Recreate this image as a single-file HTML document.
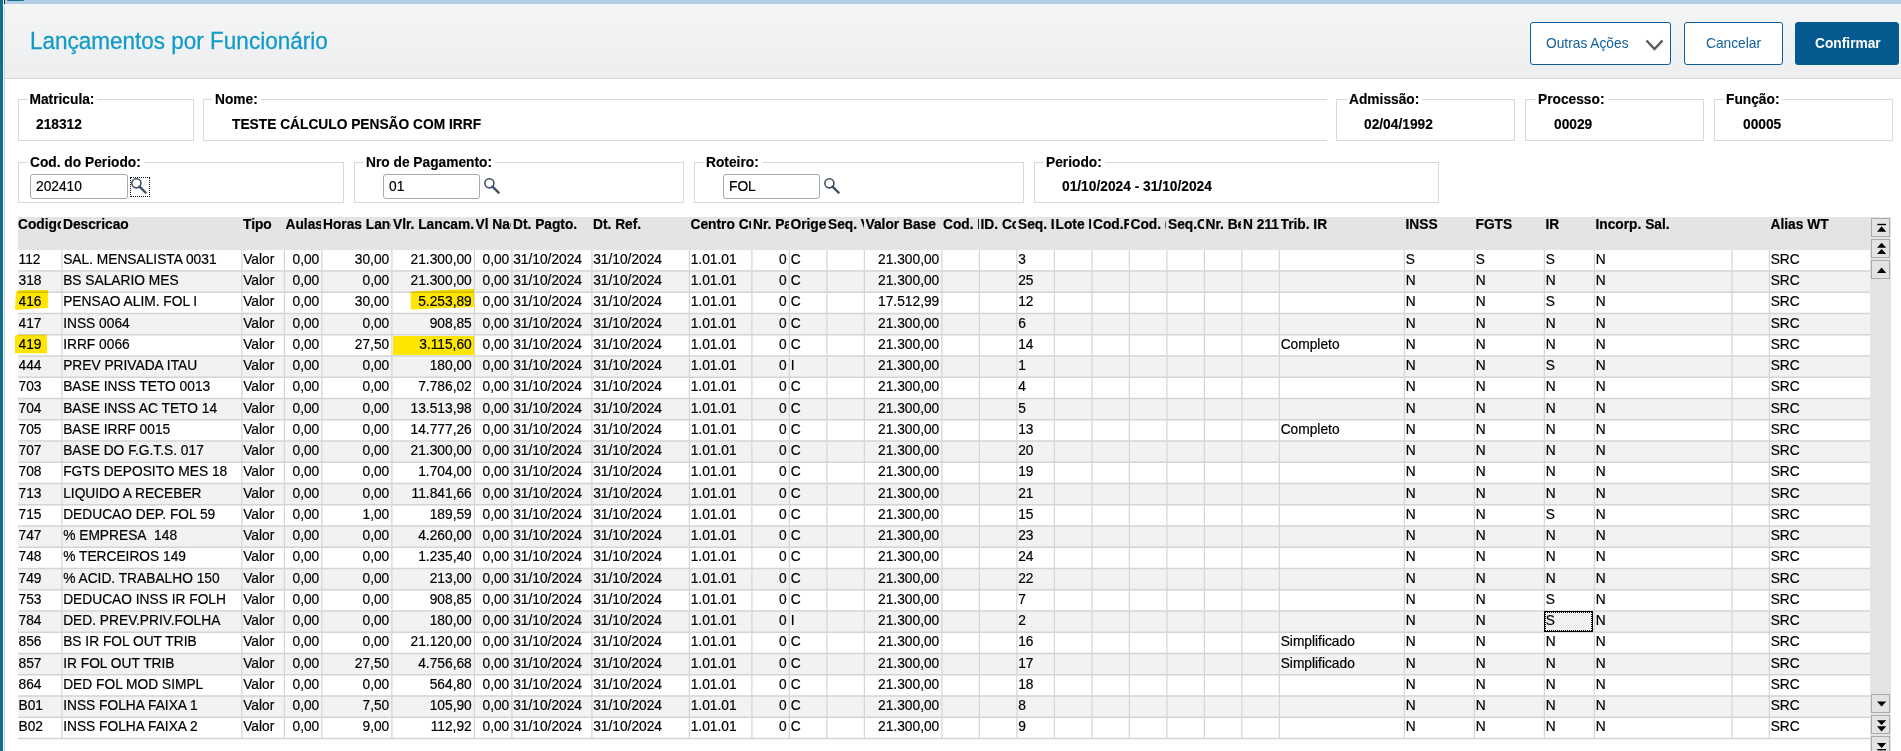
<!DOCTYPE html>
<html><head><meta charset="utf-8"><title>Lançamentos por Funcionário</title>
<style>
*{box-sizing:border-box}
html,body{margin:0;padding:0}
body{width:1901px;height:751px;overflow:hidden;position:relative;background:#fff;font-family:"Liberation Sans",sans-serif;color:#000;font-size:13.75px}
.a{position:absolute}
.t{position:absolute;white-space:nowrap;overflow:hidden;line-height:18px;height:18px;-webkit-text-stroke:0.2px #000}
.r{text-align:right}
.b{font-weight:bold}
.fs{position:absolute;border:1px solid #d9d9d9;background:#fff}
.lb{position:absolute;background:#fff;font-weight:bold;white-space:nowrap;line-height:16px;padding:0 3px 0 2px;-webkit-text-stroke:0.15px #000}
.val{position:absolute;font-weight:bold;white-space:nowrap;line-height:16px;-webkit-text-stroke:0.15px #000}
.inp{position:absolute;-webkit-text-stroke:0.2px #000;border:1px solid #a2abb0;border-radius:3px;background:#fff;line-height:23px;padding-left:5px;white-space:nowrap}
.btn{position:absolute;border:1.5px solid #0d5f93;border-radius:3px;background:#fff;color:#14609a;text-align:left;line-height:42px;white-space:nowrap}
</style></head><body>

<div class="a" style="left:0;top:0;width:3px;height:751px;background:#0f6f8d"></div>
<div class="a" style="left:3px;top:0;width:1px;height:751px;background:#fdfdfd"></div>
<div class="a" style="left:4px;top:0;width:1px;height:751px;background:#c3d6ec"></div>
<div class="a" style="left:4px;top:0;width:1px;height:4px;background:#222"></div>
<div class="a" style="left:5px;top:0;width:1896px;height:4px;background:#b5cde6"></div>
<div class="a" style="left:7px;top:0;width:17px;height:1px;background:#14708f;border-radius:0 0 2px 2px"></div>
<div class="a" style="left:5px;top:4px;width:1896px;height:74px;background:linear-gradient(#f4f5f5,#edeef0)"></div>
<div class="a" style="left:5px;top:78px;width:1896px;height:1px;background:#d6d6d6"></div>
<div class="a" style="left:30px;top:29px;font-size:22.5px;color:#0f9bc8;white-space:nowrap;line-height:26px;transform:scaleY(1.1);transform-origin:0 20.8px;-webkit-text-stroke:0.25px #0f9bc8">Lançamentos por Funcionário</div>
<div class="btn" style="left:1530px;top:22px;width:141px;height:43px;padding-left:15px">Outras Ações</div>
<svg class="a" style="left:1644px;top:38px" width="22" height="14" viewBox="0 0 22 14"><polyline points="2.5,2.5 10.5,11 18.5,2.5" fill="none" stroke="#5a5a5a" stroke-width="2.5"/></svg>
<div class="btn" style="left:1684px;top:22px;width:99px;height:43px;padding-left:21px">Cancelar</div>
<div class="btn b" style="left:1795px;top:22px;width:104px;height:43px;padding-left:19px;background:#04598e;border-color:#04598e;color:#fff">Confirmar</div>
<div class="fs" style="left:18px;top:99px;width:176px;height:42px;"></div>
<div class="lb" style="left:27.5px;top:92px">Matricula:</div>
<div class="val" style="left:36px;top:117px">218312</div>
<div class="fs" style="left:203px;top:99px;width:1124px;height:42px;border-right:0"></div>
<div class="lb" style="left:213px;top:92px">Nome:</div>
<div class="val" style="left:232px;top:117px">TESTE CÁLCULO PENSÃO COM IRRF</div>
<div class="fs" style="left:1336px;top:99px;width:179px;height:42px;"></div>
<div class="lb" style="left:1347px;top:92px">Admissão:</div>
<div class="val" style="left:1364px;top:117px">02/04/1992</div>
<div class="fs" style="left:1525px;top:99px;width:179px;height:42px;"></div>
<div class="lb" style="left:1536px;top:92px">Processo:</div>
<div class="val" style="left:1554px;top:117px">00029</div>
<div class="fs" style="left:1714px;top:99px;width:179px;height:42px;"></div>
<div class="lb" style="left:1724px;top:92px">Função:</div>
<div class="val" style="left:1743px;top:117px">00005</div>
<div class="fs" style="left:18px;top:162px;width:326px;height:41px;"></div>
<div class="lb" style="left:28px;top:155px">Cod. do Periodo:</div>
<div class="fs" style="left:354px;top:162px;width:330px;height:41px;"></div>
<div class="lb" style="left:364px;top:155px">Nro de Pagamento:</div>
<div class="fs" style="left:694px;top:162px;width:330px;height:41px;"></div>
<div class="lb" style="left:704px;top:155px">Roteiro:</div>
<div class="fs" style="left:1034px;top:162px;width:405px;height:41px;"></div>
<div class="lb" style="left:1044px;top:155px">Periodo:</div>
<div class="val" style="left:1062px;top:179px">01/10/2024 - 31/10/2024</div>
<div class="inp" style="left:30px;top:174px;width:98px;height:25px">202410</div>
<div class="a" style="left:130px;top:177px;width:20px;height:20px;border:1px dotted #111"></div>
<svg class="a" style="left:130px;top:177px" width="20" height="20" viewBox="0 0 20 20"><circle cx="6.4" cy="6.3" r="4.55" fill="none" stroke="#3e5068" stroke-width="1.6"/><line x1="9.5" y1="9.6" x2="15.6" y2="15.6" stroke="#3e5068" stroke-width="2.4" stroke-linecap="round"/></svg>
<div class="inp" style="left:383px;top:174px;width:97px;height:25px">01</div>
<svg class="a" style="left:483px;top:177px" width="20" height="20" viewBox="0 0 20 20"><circle cx="6.4" cy="6.3" r="4.55" fill="none" stroke="#3e5068" stroke-width="1.6"/><line x1="9.5" y1="9.6" x2="15.6" y2="15.6" stroke="#3e5068" stroke-width="2.4" stroke-linecap="round"/></svg>
<div class="inp" style="left:723px;top:174px;width:97px;height:25px">FOL</div>
<svg class="a" style="left:823px;top:177px" width="20" height="20" viewBox="0 0 20 20"><circle cx="6.4" cy="6.3" r="4.55" fill="none" stroke="#3e5068" stroke-width="1.6"/><line x1="9.5" y1="9.6" x2="15.6" y2="15.6" stroke="#3e5068" stroke-width="2.4" stroke-linecap="round"/></svg>
<div class="a" style="left:18px;top:217px;width:1873px;height:33px;background:#e4e4e4"></div>
<div class="t b" style="left:18px;top:216px;width:43.25px">Codigo</div>
<div class="t b" style="left:63.0px;top:216px;width:178.25px">Descricao</div>
<div class="t b" style="left:243.0px;top:216px;width:40.75px">Tipo</div>
<div class="t b" style="left:285.5px;top:216px;width:35.75px">Aulas</div>
<div class="t b" style="left:323.0px;top:216px;width:68.25px">Horas Lanc.</div>
<div class="t b" style="left:393.0px;top:216px;width:80.75px">Vlr. Lancam.</div>
<div class="t b" style="left:475.5px;top:216px;width:35.75px">Vl Nao Inc.</div>
<div class="t b" style="left:513.0px;top:216px;width:78.25px">Dt. Pagto.</div>
<div class="t b" style="left:593.0px;top:216px;width:95.75px">Dt. Ref.</div>
<div class="t b" style="left:690.5px;top:216px;width:60.75px">Centro Custo</div>
<div class="t b" style="left:753.0px;top:216px;width:35.75px">Nr. Pagto</div>
<div class="t b" style="left:790.5px;top:216px;width:35.75px">Origem</div>
<div class="t b" style="left:828.0px;top:216px;width:35.75px">Seq. Valor</div>
<div class="t b" style="left:865.5px;top:216px;width:75.75px">Valor Base</div>
<div class="t b" style="left:943.0px;top:216px;width:35.75px">Cod. IRRF</div>
<div class="t b" style="left:980.5px;top:216px;width:35.75px">ID. Cod.</div>
<div class="t b" style="left:1018.0px;top:216px;width:35.75px">Seq. Lancam</div>
<div class="t b" style="left:1055.5px;top:216px;width:35.75px">Lote Folha</div>
<div class="t b" style="left:1093.0px;top:216px;width:35.75px">Cod.Funcao</div>
<div class="t b" style="left:1130.5px;top:216px;width:35.75px">Cod. (</div>
<div class="t b" style="left:1168.0px;top:216px;width:35.75px">Seq.Cod</div>
<div class="t b" style="left:1205.5px;top:216px;width:35.75px">Nr. Bene</div>
<div class="t b" style="left:1243.0px;top:216px;width:35.75px">N 211</div>
<div class="t b" style="left:1280.5px;top:216px;width:123.25px">Trib. IR</div>
<div class="t b" style="left:1405.5px;top:216px;width:68.25px">INSS</div>
<div class="t b" style="left:1475.5px;top:216px;width:68.25px">FGTS</div>
<div class="t b" style="left:1545.5px;top:216px;width:48.25px">IR</div>
<div class="t b" style="left:1595.5px;top:216px;width:135.75px">Incorp. Sal.</div>
<div class="t b" style="left:1733.0px;top:216px;width:35.75px"></div>
<div class="t b" style="left:1770.5px;top:216px;width:99.5px">Alias WT</div>
<div class="a" style="left:1870px;top:250px;width:21px;height:501px;background:#e4e4e4"></div>
<svg class="a" style="left:0;top:0" width="1901" height="751"><rect x="18" y="271.25" width="1852" height="21.25" fill="#f2f2f2"/><rect x="18" y="313.75" width="1852" height="21.25" fill="#f2f2f2"/><rect x="18" y="356.25" width="1852" height="21.25" fill="#f2f2f2"/><rect x="18" y="398.75" width="1852" height="21.25" fill="#f2f2f2"/><rect x="18" y="441.25" width="1852" height="21.25" fill="#f2f2f2"/><rect x="18" y="483.75" width="1852" height="21.25" fill="#f2f2f2"/><rect x="18" y="526.25" width="1852" height="21.25" fill="#f2f2f2"/><rect x="18" y="568.75" width="1852" height="21.25" fill="#f2f2f2"/><rect x="18" y="611.25" width="1852" height="21.25" fill="#f2f2f2"/><rect x="18" y="653.75" width="1852" height="21.25" fill="#f2f2f2"/><rect x="18" y="696.25" width="1852" height="21.25" fill="#f2f2f2"/><rect x="18" y="270.25" width="1852" height="1.5" fill="#d4d4d4"/><rect x="18" y="291.5" width="1852" height="1.5" fill="#d4d4d4"/><rect x="18" y="312.75" width="1852" height="1.5" fill="#d4d4d4"/><rect x="18" y="334.0" width="1852" height="1.5" fill="#d4d4d4"/><rect x="18" y="355.25" width="1852" height="1.5" fill="#d4d4d4"/><rect x="18" y="376.5" width="1852" height="1.5" fill="#d4d4d4"/><rect x="18" y="397.75" width="1852" height="1.5" fill="#d4d4d4"/><rect x="18" y="419.0" width="1852" height="1.5" fill="#d4d4d4"/><rect x="18" y="440.25" width="1852" height="1.5" fill="#d4d4d4"/><rect x="18" y="461.5" width="1852" height="1.5" fill="#d4d4d4"/><rect x="18" y="482.75" width="1852" height="1.5" fill="#d4d4d4"/><rect x="18" y="504.0" width="1852" height="1.5" fill="#d4d4d4"/><rect x="18" y="525.25" width="1852" height="1.5" fill="#d4d4d4"/><rect x="18" y="546.5" width="1852" height="1.5" fill="#d4d4d4"/><rect x="18" y="567.75" width="1852" height="1.5" fill="#d4d4d4"/><rect x="18" y="589.0" width="1852" height="1.5" fill="#d4d4d4"/><rect x="18" y="610.25" width="1852" height="1.5" fill="#d4d4d4"/><rect x="18" y="631.5" width="1852" height="1.5" fill="#d4d4d4"/><rect x="18" y="652.75" width="1852" height="1.5" fill="#d4d4d4"/><rect x="18" y="674.0" width="1852" height="1.5" fill="#d4d4d4"/><rect x="18" y="695.25" width="1852" height="1.5" fill="#d4d4d4"/><rect x="18" y="716.5" width="1852" height="1.5" fill="#d4d4d4"/><rect x="18" y="737.75" width="1852" height="1.5" fill="#d4d4d4"/><rect x="61.25" y="250" width="1.25" height="488.75" fill="#d6d6d6"/><rect x="241.25" y="250" width="1.25" height="488.75" fill="#d6d6d6"/><rect x="283.75" y="250" width="1.25" height="488.75" fill="#d6d6d6"/><rect x="321.25" y="250" width="1.25" height="488.75" fill="#d6d6d6"/><rect x="391.25" y="250" width="1.25" height="488.75" fill="#d6d6d6"/><rect x="473.75" y="250" width="1.25" height="488.75" fill="#d6d6d6"/><rect x="511.25" y="250" width="1.25" height="488.75" fill="#d6d6d6"/><rect x="591.25" y="250" width="1.25" height="488.75" fill="#d6d6d6"/><rect x="688.75" y="250" width="1.25" height="488.75" fill="#d6d6d6"/><rect x="751.25" y="250" width="1.25" height="488.75" fill="#d6d6d6"/><rect x="788.75" y="250" width="1.25" height="488.75" fill="#d6d6d6"/><rect x="826.25" y="250" width="1.25" height="488.75" fill="#d6d6d6"/><rect x="863.75" y="250" width="1.25" height="488.75" fill="#d6d6d6"/><rect x="941.25" y="250" width="1.25" height="488.75" fill="#d6d6d6"/><rect x="978.75" y="250" width="1.25" height="488.75" fill="#d6d6d6"/><rect x="1016.25" y="250" width="1.25" height="488.75" fill="#d6d6d6"/><rect x="1053.75" y="250" width="1.25" height="488.75" fill="#d6d6d6"/><rect x="1091.25" y="250" width="1.25" height="488.75" fill="#d6d6d6"/><rect x="1128.75" y="250" width="1.25" height="488.75" fill="#d6d6d6"/><rect x="1166.25" y="250" width="1.25" height="488.75" fill="#d6d6d6"/><rect x="1203.75" y="250" width="1.25" height="488.75" fill="#d6d6d6"/><rect x="1241.25" y="250" width="1.25" height="488.75" fill="#d6d6d6"/><rect x="1278.75" y="250" width="1.25" height="488.75" fill="#d6d6d6"/><rect x="1403.75" y="250" width="1.25" height="488.75" fill="#d6d6d6"/><rect x="1473.75" y="250" width="1.25" height="488.75" fill="#d6d6d6"/><rect x="1543.75" y="250" width="1.25" height="488.75" fill="#d6d6d6"/><rect x="1593.75" y="250" width="1.25" height="488.75" fill="#d6d6d6"/><rect x="1731.25" y="250" width="1.25" height="488.75" fill="#d6d6d6"/><rect x="1768.75" y="250" width="1.25" height="488.75" fill="#d6d6d6"/></svg>
<div class="t" style="left:18.5px;top:251px;width:42.75px">112</div>
<div class="t" style="left:63.2px;top:251px;width:178.05px">SAL. MENSALISTA 0031</div>
<div class="t" style="left:243.2px;top:251px;width:40.55px">Valor</div>
<div class="t r" style="left:285.75px;top:251px;width:33.5px">0,00</div>
<div class="t r" style="left:323.25px;top:251px;width:66.0px">30,00</div>
<div class="t r" style="left:393.25px;top:251px;width:78.5px">21.300,00</div>
<div class="t r" style="left:475.75px;top:251px;width:33.5px">0,00</div>
<div class="t" style="left:513.2px;top:251px;width:78.05px">31/10/2024</div>
<div class="t" style="left:593.2px;top:251px;width:95.55px">31/10/2024</div>
<div class="t" style="left:690.7px;top:251px;width:60.55px">1.01.01</div>
<div class="t r" style="left:753.25px;top:251px;width:33.5px">0</div>
<div class="t" style="left:790.7px;top:251px;width:35.55px">C</div>
<div class="t r" style="left:865.75px;top:251px;width:73.5px">21.300,00</div>
<div class="t" style="left:1018.2px;top:251px;width:35.55px">3</div>
<div class="t" style="left:1405.7px;top:251px;width:68.05px">S</div>
<div class="t" style="left:1475.7px;top:251px;width:68.05px">S</div>
<div class="t" style="left:1545.7px;top:251px;width:48.05px">S</div>
<div class="t" style="left:1595.7px;top:251px;width:135.55px">N</div>
<div class="t" style="left:1770.7px;top:251px;width:99.3px">SRC</div>
<div class="t" style="left:18.5px;top:272px;width:42.75px">318</div>
<div class="t" style="left:63.2px;top:272px;width:178.05px">BS SALARIO MES</div>
<div class="t" style="left:243.2px;top:272px;width:40.55px">Valor</div>
<div class="t r" style="left:285.75px;top:272px;width:33.5px">0,00</div>
<div class="t r" style="left:323.25px;top:272px;width:66.0px">0,00</div>
<div class="t r" style="left:393.25px;top:272px;width:78.5px">21.300,00</div>
<div class="t r" style="left:475.75px;top:272px;width:33.5px">0,00</div>
<div class="t" style="left:513.2px;top:272px;width:78.05px">31/10/2024</div>
<div class="t" style="left:593.2px;top:272px;width:95.55px">31/10/2024</div>
<div class="t" style="left:690.7px;top:272px;width:60.55px">1.01.01</div>
<div class="t r" style="left:753.25px;top:272px;width:33.5px">0</div>
<div class="t" style="left:790.7px;top:272px;width:35.55px">C</div>
<div class="t r" style="left:865.75px;top:272px;width:73.5px">21.300,00</div>
<div class="t" style="left:1018.2px;top:272px;width:35.55px">25</div>
<div class="t" style="left:1405.7px;top:272px;width:68.05px">N</div>
<div class="t" style="left:1475.7px;top:272px;width:68.05px">N</div>
<div class="t" style="left:1545.7px;top:272px;width:48.05px">N</div>
<div class="t" style="left:1595.7px;top:272px;width:135.55px">N</div>
<div class="t" style="left:1770.7px;top:272px;width:99.3px">SRC</div>
<div class="t" style="left:18.5px;top:293px;width:42.75px">416</div>
<div class="t" style="left:63.2px;top:293px;width:178.05px">PENSAO ALIM. FOL I</div>
<div class="t" style="left:243.2px;top:293px;width:40.55px">Valor</div>
<div class="t r" style="left:285.75px;top:293px;width:33.5px">0,00</div>
<div class="t r" style="left:323.25px;top:293px;width:66.0px">30,00</div>
<div class="t r" style="left:393.25px;top:293px;width:78.5px">5.253,89</div>
<div class="t r" style="left:475.75px;top:293px;width:33.5px">0,00</div>
<div class="t" style="left:513.2px;top:293px;width:78.05px">31/10/2024</div>
<div class="t" style="left:593.2px;top:293px;width:95.55px">31/10/2024</div>
<div class="t" style="left:690.7px;top:293px;width:60.55px">1.01.01</div>
<div class="t r" style="left:753.25px;top:293px;width:33.5px">0</div>
<div class="t" style="left:790.7px;top:293px;width:35.55px">C</div>
<div class="t r" style="left:865.75px;top:293px;width:73.5px">17.512,99</div>
<div class="t" style="left:1018.2px;top:293px;width:35.55px">12</div>
<div class="t" style="left:1405.7px;top:293px;width:68.05px">N</div>
<div class="t" style="left:1475.7px;top:293px;width:68.05px">N</div>
<div class="t" style="left:1545.7px;top:293px;width:48.05px">S</div>
<div class="t" style="left:1595.7px;top:293px;width:135.55px">N</div>
<div class="t" style="left:1770.7px;top:293px;width:99.3px">SRC</div>
<div class="t" style="left:18.5px;top:315px;width:42.75px">417</div>
<div class="t" style="left:63.2px;top:315px;width:178.05px">INSS 0064</div>
<div class="t" style="left:243.2px;top:315px;width:40.55px">Valor</div>
<div class="t r" style="left:285.75px;top:315px;width:33.5px">0,00</div>
<div class="t r" style="left:323.25px;top:315px;width:66.0px">0,00</div>
<div class="t r" style="left:393.25px;top:315px;width:78.5px">908,85</div>
<div class="t r" style="left:475.75px;top:315px;width:33.5px">0,00</div>
<div class="t" style="left:513.2px;top:315px;width:78.05px">31/10/2024</div>
<div class="t" style="left:593.2px;top:315px;width:95.55px">31/10/2024</div>
<div class="t" style="left:690.7px;top:315px;width:60.55px">1.01.01</div>
<div class="t r" style="left:753.25px;top:315px;width:33.5px">0</div>
<div class="t" style="left:790.7px;top:315px;width:35.55px">C</div>
<div class="t r" style="left:865.75px;top:315px;width:73.5px">21.300,00</div>
<div class="t" style="left:1018.2px;top:315px;width:35.55px">6</div>
<div class="t" style="left:1405.7px;top:315px;width:68.05px">N</div>
<div class="t" style="left:1475.7px;top:315px;width:68.05px">N</div>
<div class="t" style="left:1545.7px;top:315px;width:48.05px">N</div>
<div class="t" style="left:1595.7px;top:315px;width:135.55px">N</div>
<div class="t" style="left:1770.7px;top:315px;width:99.3px">SRC</div>
<div class="t" style="left:18.5px;top:336px;width:42.75px">419</div>
<div class="t" style="left:63.2px;top:336px;width:178.05px">IRRF 0066</div>
<div class="t" style="left:243.2px;top:336px;width:40.55px">Valor</div>
<div class="t r" style="left:285.75px;top:336px;width:33.5px">0,00</div>
<div class="t r" style="left:323.25px;top:336px;width:66.0px">27,50</div>
<div class="t r" style="left:393.25px;top:336px;width:78.5px">3.115,60</div>
<div class="t r" style="left:475.75px;top:336px;width:33.5px">0,00</div>
<div class="t" style="left:513.2px;top:336px;width:78.05px">31/10/2024</div>
<div class="t" style="left:593.2px;top:336px;width:95.55px">31/10/2024</div>
<div class="t" style="left:690.7px;top:336px;width:60.55px">1.01.01</div>
<div class="t r" style="left:753.25px;top:336px;width:33.5px">0</div>
<div class="t" style="left:790.7px;top:336px;width:35.55px">C</div>
<div class="t r" style="left:865.75px;top:336px;width:73.5px">21.300,00</div>
<div class="t" style="left:1018.2px;top:336px;width:35.55px">14</div>
<div class="t" style="left:1280.7px;top:336px;width:123.05px">Completo</div>
<div class="t" style="left:1405.7px;top:336px;width:68.05px">N</div>
<div class="t" style="left:1475.7px;top:336px;width:68.05px">N</div>
<div class="t" style="left:1545.7px;top:336px;width:48.05px">N</div>
<div class="t" style="left:1595.7px;top:336px;width:135.55px">N</div>
<div class="t" style="left:1770.7px;top:336px;width:99.3px">SRC</div>
<div class="t" style="left:18.5px;top:357px;width:42.75px">444</div>
<div class="t" style="left:63.2px;top:357px;width:178.05px">PREV PRIVADA ITAU</div>
<div class="t" style="left:243.2px;top:357px;width:40.55px">Valor</div>
<div class="t r" style="left:285.75px;top:357px;width:33.5px">0,00</div>
<div class="t r" style="left:323.25px;top:357px;width:66.0px">0,00</div>
<div class="t r" style="left:393.25px;top:357px;width:78.5px">180,00</div>
<div class="t r" style="left:475.75px;top:357px;width:33.5px">0,00</div>
<div class="t" style="left:513.2px;top:357px;width:78.05px">31/10/2024</div>
<div class="t" style="left:593.2px;top:357px;width:95.55px">31/10/2024</div>
<div class="t" style="left:690.7px;top:357px;width:60.55px">1.01.01</div>
<div class="t r" style="left:753.25px;top:357px;width:33.5px">0</div>
<div class="t" style="left:790.7px;top:357px;width:35.55px">I</div>
<div class="t r" style="left:865.75px;top:357px;width:73.5px">21.300,00</div>
<div class="t" style="left:1018.2px;top:357px;width:35.55px">1</div>
<div class="t" style="left:1405.7px;top:357px;width:68.05px">N</div>
<div class="t" style="left:1475.7px;top:357px;width:68.05px">N</div>
<div class="t" style="left:1545.7px;top:357px;width:48.05px">S</div>
<div class="t" style="left:1595.7px;top:357px;width:135.55px">N</div>
<div class="t" style="left:1770.7px;top:357px;width:99.3px">SRC</div>
<div class="t" style="left:18.5px;top:378px;width:42.75px">703</div>
<div class="t" style="left:63.2px;top:378px;width:178.05px">BASE INSS TETO 0013</div>
<div class="t" style="left:243.2px;top:378px;width:40.55px">Valor</div>
<div class="t r" style="left:285.75px;top:378px;width:33.5px">0,00</div>
<div class="t r" style="left:323.25px;top:378px;width:66.0px">0,00</div>
<div class="t r" style="left:393.25px;top:378px;width:78.5px">7.786,02</div>
<div class="t r" style="left:475.75px;top:378px;width:33.5px">0,00</div>
<div class="t" style="left:513.2px;top:378px;width:78.05px">31/10/2024</div>
<div class="t" style="left:593.2px;top:378px;width:95.55px">31/10/2024</div>
<div class="t" style="left:690.7px;top:378px;width:60.55px">1.01.01</div>
<div class="t r" style="left:753.25px;top:378px;width:33.5px">0</div>
<div class="t" style="left:790.7px;top:378px;width:35.55px">C</div>
<div class="t r" style="left:865.75px;top:378px;width:73.5px">21.300,00</div>
<div class="t" style="left:1018.2px;top:378px;width:35.55px">4</div>
<div class="t" style="left:1405.7px;top:378px;width:68.05px">N</div>
<div class="t" style="left:1475.7px;top:378px;width:68.05px">N</div>
<div class="t" style="left:1545.7px;top:378px;width:48.05px">N</div>
<div class="t" style="left:1595.7px;top:378px;width:135.55px">N</div>
<div class="t" style="left:1770.7px;top:378px;width:99.3px">SRC</div>
<div class="t" style="left:18.5px;top:400px;width:42.75px">704</div>
<div class="t" style="left:63.2px;top:400px;width:178.05px">BASE INSS AC TETO 14</div>
<div class="t" style="left:243.2px;top:400px;width:40.55px">Valor</div>
<div class="t r" style="left:285.75px;top:400px;width:33.5px">0,00</div>
<div class="t r" style="left:323.25px;top:400px;width:66.0px">0,00</div>
<div class="t r" style="left:393.25px;top:400px;width:78.5px">13.513,98</div>
<div class="t r" style="left:475.75px;top:400px;width:33.5px">0,00</div>
<div class="t" style="left:513.2px;top:400px;width:78.05px">31/10/2024</div>
<div class="t" style="left:593.2px;top:400px;width:95.55px">31/10/2024</div>
<div class="t" style="left:690.7px;top:400px;width:60.55px">1.01.01</div>
<div class="t r" style="left:753.25px;top:400px;width:33.5px">0</div>
<div class="t" style="left:790.7px;top:400px;width:35.55px">C</div>
<div class="t r" style="left:865.75px;top:400px;width:73.5px">21.300,00</div>
<div class="t" style="left:1018.2px;top:400px;width:35.55px">5</div>
<div class="t" style="left:1405.7px;top:400px;width:68.05px">N</div>
<div class="t" style="left:1475.7px;top:400px;width:68.05px">N</div>
<div class="t" style="left:1545.7px;top:400px;width:48.05px">N</div>
<div class="t" style="left:1595.7px;top:400px;width:135.55px">N</div>
<div class="t" style="left:1770.7px;top:400px;width:99.3px">SRC</div>
<div class="t" style="left:18.5px;top:421px;width:42.75px">705</div>
<div class="t" style="left:63.2px;top:421px;width:178.05px">BASE IRRF 0015</div>
<div class="t" style="left:243.2px;top:421px;width:40.55px">Valor</div>
<div class="t r" style="left:285.75px;top:421px;width:33.5px">0,00</div>
<div class="t r" style="left:323.25px;top:421px;width:66.0px">0,00</div>
<div class="t r" style="left:393.25px;top:421px;width:78.5px">14.777,26</div>
<div class="t r" style="left:475.75px;top:421px;width:33.5px">0,00</div>
<div class="t" style="left:513.2px;top:421px;width:78.05px">31/10/2024</div>
<div class="t" style="left:593.2px;top:421px;width:95.55px">31/10/2024</div>
<div class="t" style="left:690.7px;top:421px;width:60.55px">1.01.01</div>
<div class="t r" style="left:753.25px;top:421px;width:33.5px">0</div>
<div class="t" style="left:790.7px;top:421px;width:35.55px">C</div>
<div class="t r" style="left:865.75px;top:421px;width:73.5px">21.300,00</div>
<div class="t" style="left:1018.2px;top:421px;width:35.55px">13</div>
<div class="t" style="left:1280.7px;top:421px;width:123.05px">Completo</div>
<div class="t" style="left:1405.7px;top:421px;width:68.05px">N</div>
<div class="t" style="left:1475.7px;top:421px;width:68.05px">N</div>
<div class="t" style="left:1545.7px;top:421px;width:48.05px">N</div>
<div class="t" style="left:1595.7px;top:421px;width:135.55px">N</div>
<div class="t" style="left:1770.7px;top:421px;width:99.3px">SRC</div>
<div class="t" style="left:18.5px;top:442px;width:42.75px">707</div>
<div class="t" style="left:63.2px;top:442px;width:178.05px">BASE DO F.G.T.S. 017</div>
<div class="t" style="left:243.2px;top:442px;width:40.55px">Valor</div>
<div class="t r" style="left:285.75px;top:442px;width:33.5px">0,00</div>
<div class="t r" style="left:323.25px;top:442px;width:66.0px">0,00</div>
<div class="t r" style="left:393.25px;top:442px;width:78.5px">21.300,00</div>
<div class="t r" style="left:475.75px;top:442px;width:33.5px">0,00</div>
<div class="t" style="left:513.2px;top:442px;width:78.05px">31/10/2024</div>
<div class="t" style="left:593.2px;top:442px;width:95.55px">31/10/2024</div>
<div class="t" style="left:690.7px;top:442px;width:60.55px">1.01.01</div>
<div class="t r" style="left:753.25px;top:442px;width:33.5px">0</div>
<div class="t" style="left:790.7px;top:442px;width:35.55px">C</div>
<div class="t r" style="left:865.75px;top:442px;width:73.5px">21.300,00</div>
<div class="t" style="left:1018.2px;top:442px;width:35.55px">20</div>
<div class="t" style="left:1405.7px;top:442px;width:68.05px">N</div>
<div class="t" style="left:1475.7px;top:442px;width:68.05px">N</div>
<div class="t" style="left:1545.7px;top:442px;width:48.05px">N</div>
<div class="t" style="left:1595.7px;top:442px;width:135.55px">N</div>
<div class="t" style="left:1770.7px;top:442px;width:99.3px">SRC</div>
<div class="t" style="left:18.5px;top:463px;width:42.75px">708</div>
<div class="t" style="left:63.2px;top:463px;width:178.05px">FGTS DEPOSITO MES 18</div>
<div class="t" style="left:243.2px;top:463px;width:40.55px">Valor</div>
<div class="t r" style="left:285.75px;top:463px;width:33.5px">0,00</div>
<div class="t r" style="left:323.25px;top:463px;width:66.0px">0,00</div>
<div class="t r" style="left:393.25px;top:463px;width:78.5px">1.704,00</div>
<div class="t r" style="left:475.75px;top:463px;width:33.5px">0,00</div>
<div class="t" style="left:513.2px;top:463px;width:78.05px">31/10/2024</div>
<div class="t" style="left:593.2px;top:463px;width:95.55px">31/10/2024</div>
<div class="t" style="left:690.7px;top:463px;width:60.55px">1.01.01</div>
<div class="t r" style="left:753.25px;top:463px;width:33.5px">0</div>
<div class="t" style="left:790.7px;top:463px;width:35.55px">C</div>
<div class="t r" style="left:865.75px;top:463px;width:73.5px">21.300,00</div>
<div class="t" style="left:1018.2px;top:463px;width:35.55px">19</div>
<div class="t" style="left:1405.7px;top:463px;width:68.05px">N</div>
<div class="t" style="left:1475.7px;top:463px;width:68.05px">N</div>
<div class="t" style="left:1545.7px;top:463px;width:48.05px">N</div>
<div class="t" style="left:1595.7px;top:463px;width:135.55px">N</div>
<div class="t" style="left:1770.7px;top:463px;width:99.3px">SRC</div>
<div class="t" style="left:18.5px;top:485px;width:42.75px">713</div>
<div class="t" style="left:63.2px;top:485px;width:178.05px">LIQUIDO A RECEBER</div>
<div class="t" style="left:243.2px;top:485px;width:40.55px">Valor</div>
<div class="t r" style="left:285.75px;top:485px;width:33.5px">0,00</div>
<div class="t r" style="left:323.25px;top:485px;width:66.0px">0,00</div>
<div class="t r" style="left:393.25px;top:485px;width:78.5px">11.841,66</div>
<div class="t r" style="left:475.75px;top:485px;width:33.5px">0,00</div>
<div class="t" style="left:513.2px;top:485px;width:78.05px">31/10/2024</div>
<div class="t" style="left:593.2px;top:485px;width:95.55px">31/10/2024</div>
<div class="t" style="left:690.7px;top:485px;width:60.55px">1.01.01</div>
<div class="t r" style="left:753.25px;top:485px;width:33.5px">0</div>
<div class="t" style="left:790.7px;top:485px;width:35.55px">C</div>
<div class="t r" style="left:865.75px;top:485px;width:73.5px">21.300,00</div>
<div class="t" style="left:1018.2px;top:485px;width:35.55px">21</div>
<div class="t" style="left:1405.7px;top:485px;width:68.05px">N</div>
<div class="t" style="left:1475.7px;top:485px;width:68.05px">N</div>
<div class="t" style="left:1545.7px;top:485px;width:48.05px">N</div>
<div class="t" style="left:1595.7px;top:485px;width:135.55px">N</div>
<div class="t" style="left:1770.7px;top:485px;width:99.3px">SRC</div>
<div class="t" style="left:18.5px;top:506px;width:42.75px">715</div>
<div class="t" style="left:63.2px;top:506px;width:178.05px">DEDUCAO DEP. FOL 59</div>
<div class="t" style="left:243.2px;top:506px;width:40.55px">Valor</div>
<div class="t r" style="left:285.75px;top:506px;width:33.5px">0,00</div>
<div class="t r" style="left:323.25px;top:506px;width:66.0px">1,00</div>
<div class="t r" style="left:393.25px;top:506px;width:78.5px">189,59</div>
<div class="t r" style="left:475.75px;top:506px;width:33.5px">0,00</div>
<div class="t" style="left:513.2px;top:506px;width:78.05px">31/10/2024</div>
<div class="t" style="left:593.2px;top:506px;width:95.55px">31/10/2024</div>
<div class="t" style="left:690.7px;top:506px;width:60.55px">1.01.01</div>
<div class="t r" style="left:753.25px;top:506px;width:33.5px">0</div>
<div class="t" style="left:790.7px;top:506px;width:35.55px">C</div>
<div class="t r" style="left:865.75px;top:506px;width:73.5px">21.300,00</div>
<div class="t" style="left:1018.2px;top:506px;width:35.55px">15</div>
<div class="t" style="left:1405.7px;top:506px;width:68.05px">N</div>
<div class="t" style="left:1475.7px;top:506px;width:68.05px">N</div>
<div class="t" style="left:1545.7px;top:506px;width:48.05px">S</div>
<div class="t" style="left:1595.7px;top:506px;width:135.55px">N</div>
<div class="t" style="left:1770.7px;top:506px;width:99.3px">SRC</div>
<div class="t" style="left:18.5px;top:527px;width:42.75px">747</div>
<div class="t" style="left:63.2px;top:527px;width:178.05px">% EMPRESA&nbsp; 148</div>
<div class="t" style="left:243.2px;top:527px;width:40.55px">Valor</div>
<div class="t r" style="left:285.75px;top:527px;width:33.5px">0,00</div>
<div class="t r" style="left:323.25px;top:527px;width:66.0px">0,00</div>
<div class="t r" style="left:393.25px;top:527px;width:78.5px">4.260,00</div>
<div class="t r" style="left:475.75px;top:527px;width:33.5px">0,00</div>
<div class="t" style="left:513.2px;top:527px;width:78.05px">31/10/2024</div>
<div class="t" style="left:593.2px;top:527px;width:95.55px">31/10/2024</div>
<div class="t" style="left:690.7px;top:527px;width:60.55px">1.01.01</div>
<div class="t r" style="left:753.25px;top:527px;width:33.5px">0</div>
<div class="t" style="left:790.7px;top:527px;width:35.55px">C</div>
<div class="t r" style="left:865.75px;top:527px;width:73.5px">21.300,00</div>
<div class="t" style="left:1018.2px;top:527px;width:35.55px">23</div>
<div class="t" style="left:1405.7px;top:527px;width:68.05px">N</div>
<div class="t" style="left:1475.7px;top:527px;width:68.05px">N</div>
<div class="t" style="left:1545.7px;top:527px;width:48.05px">N</div>
<div class="t" style="left:1595.7px;top:527px;width:135.55px">N</div>
<div class="t" style="left:1770.7px;top:527px;width:99.3px">SRC</div>
<div class="t" style="left:18.5px;top:548px;width:42.75px">748</div>
<div class="t" style="left:63.2px;top:548px;width:178.05px">% TERCEIROS 149</div>
<div class="t" style="left:243.2px;top:548px;width:40.55px">Valor</div>
<div class="t r" style="left:285.75px;top:548px;width:33.5px">0,00</div>
<div class="t r" style="left:323.25px;top:548px;width:66.0px">0,00</div>
<div class="t r" style="left:393.25px;top:548px;width:78.5px">1.235,40</div>
<div class="t r" style="left:475.75px;top:548px;width:33.5px">0,00</div>
<div class="t" style="left:513.2px;top:548px;width:78.05px">31/10/2024</div>
<div class="t" style="left:593.2px;top:548px;width:95.55px">31/10/2024</div>
<div class="t" style="left:690.7px;top:548px;width:60.55px">1.01.01</div>
<div class="t r" style="left:753.25px;top:548px;width:33.5px">0</div>
<div class="t" style="left:790.7px;top:548px;width:35.55px">C</div>
<div class="t r" style="left:865.75px;top:548px;width:73.5px">21.300,00</div>
<div class="t" style="left:1018.2px;top:548px;width:35.55px">24</div>
<div class="t" style="left:1405.7px;top:548px;width:68.05px">N</div>
<div class="t" style="left:1475.7px;top:548px;width:68.05px">N</div>
<div class="t" style="left:1545.7px;top:548px;width:48.05px">N</div>
<div class="t" style="left:1595.7px;top:548px;width:135.55px">N</div>
<div class="t" style="left:1770.7px;top:548px;width:99.3px">SRC</div>
<div class="t" style="left:18.5px;top:570px;width:42.75px">749</div>
<div class="t" style="left:63.2px;top:570px;width:178.05px">% ACID. TRABALHO 150</div>
<div class="t" style="left:243.2px;top:570px;width:40.55px">Valor</div>
<div class="t r" style="left:285.75px;top:570px;width:33.5px">0,00</div>
<div class="t r" style="left:323.25px;top:570px;width:66.0px">0,00</div>
<div class="t r" style="left:393.25px;top:570px;width:78.5px">213,00</div>
<div class="t r" style="left:475.75px;top:570px;width:33.5px">0,00</div>
<div class="t" style="left:513.2px;top:570px;width:78.05px">31/10/2024</div>
<div class="t" style="left:593.2px;top:570px;width:95.55px">31/10/2024</div>
<div class="t" style="left:690.7px;top:570px;width:60.55px">1.01.01</div>
<div class="t r" style="left:753.25px;top:570px;width:33.5px">0</div>
<div class="t" style="left:790.7px;top:570px;width:35.55px">C</div>
<div class="t r" style="left:865.75px;top:570px;width:73.5px">21.300,00</div>
<div class="t" style="left:1018.2px;top:570px;width:35.55px">22</div>
<div class="t" style="left:1405.7px;top:570px;width:68.05px">N</div>
<div class="t" style="left:1475.7px;top:570px;width:68.05px">N</div>
<div class="t" style="left:1545.7px;top:570px;width:48.05px">N</div>
<div class="t" style="left:1595.7px;top:570px;width:135.55px">N</div>
<div class="t" style="left:1770.7px;top:570px;width:99.3px">SRC</div>
<div class="t" style="left:18.5px;top:591px;width:42.75px">753</div>
<div class="t" style="left:63.2px;top:591px;width:178.05px">DEDUCAO INSS IR FOLH</div>
<div class="t" style="left:243.2px;top:591px;width:40.55px">Valor</div>
<div class="t r" style="left:285.75px;top:591px;width:33.5px">0,00</div>
<div class="t r" style="left:323.25px;top:591px;width:66.0px">0,00</div>
<div class="t r" style="left:393.25px;top:591px;width:78.5px">908,85</div>
<div class="t r" style="left:475.75px;top:591px;width:33.5px">0,00</div>
<div class="t" style="left:513.2px;top:591px;width:78.05px">31/10/2024</div>
<div class="t" style="left:593.2px;top:591px;width:95.55px">31/10/2024</div>
<div class="t" style="left:690.7px;top:591px;width:60.55px">1.01.01</div>
<div class="t r" style="left:753.25px;top:591px;width:33.5px">0</div>
<div class="t" style="left:790.7px;top:591px;width:35.55px">C</div>
<div class="t r" style="left:865.75px;top:591px;width:73.5px">21.300,00</div>
<div class="t" style="left:1018.2px;top:591px;width:35.55px">7</div>
<div class="t" style="left:1405.7px;top:591px;width:68.05px">N</div>
<div class="t" style="left:1475.7px;top:591px;width:68.05px">N</div>
<div class="t" style="left:1545.7px;top:591px;width:48.05px">S</div>
<div class="t" style="left:1595.7px;top:591px;width:135.55px">N</div>
<div class="t" style="left:1770.7px;top:591px;width:99.3px">SRC</div>
<div class="t" style="left:18.5px;top:612px;width:42.75px">784</div>
<div class="t" style="left:63.2px;top:612px;width:178.05px">DED. PREV.PRIV.FOLHA</div>
<div class="t" style="left:243.2px;top:612px;width:40.55px">Valor</div>
<div class="t r" style="left:285.75px;top:612px;width:33.5px">0,00</div>
<div class="t r" style="left:323.25px;top:612px;width:66.0px">0,00</div>
<div class="t r" style="left:393.25px;top:612px;width:78.5px">180,00</div>
<div class="t r" style="left:475.75px;top:612px;width:33.5px">0,00</div>
<div class="t" style="left:513.2px;top:612px;width:78.05px">31/10/2024</div>
<div class="t" style="left:593.2px;top:612px;width:95.55px">31/10/2024</div>
<div class="t" style="left:690.7px;top:612px;width:60.55px">1.01.01</div>
<div class="t r" style="left:753.25px;top:612px;width:33.5px">0</div>
<div class="t" style="left:790.7px;top:612px;width:35.55px">I</div>
<div class="t r" style="left:865.75px;top:612px;width:73.5px">21.300,00</div>
<div class="t" style="left:1018.2px;top:612px;width:35.55px">2</div>
<div class="t" style="left:1405.7px;top:612px;width:68.05px">N</div>
<div class="t" style="left:1475.7px;top:612px;width:68.05px">N</div>
<div class="t" style="left:1545.7px;top:612px;width:48.05px">S</div>
<div class="t" style="left:1595.7px;top:612px;width:135.55px">N</div>
<div class="t" style="left:1770.7px;top:612px;width:99.3px">SRC</div>
<div class="t" style="left:18.5px;top:633px;width:42.75px">856</div>
<div class="t" style="left:63.2px;top:633px;width:178.05px">BS IR FOL OUT TRIB</div>
<div class="t" style="left:243.2px;top:633px;width:40.55px">Valor</div>
<div class="t r" style="left:285.75px;top:633px;width:33.5px">0,00</div>
<div class="t r" style="left:323.25px;top:633px;width:66.0px">0,00</div>
<div class="t r" style="left:393.25px;top:633px;width:78.5px">21.120,00</div>
<div class="t r" style="left:475.75px;top:633px;width:33.5px">0,00</div>
<div class="t" style="left:513.2px;top:633px;width:78.05px">31/10/2024</div>
<div class="t" style="left:593.2px;top:633px;width:95.55px">31/10/2024</div>
<div class="t" style="left:690.7px;top:633px;width:60.55px">1.01.01</div>
<div class="t r" style="left:753.25px;top:633px;width:33.5px">0</div>
<div class="t" style="left:790.7px;top:633px;width:35.55px">C</div>
<div class="t r" style="left:865.75px;top:633px;width:73.5px">21.300,00</div>
<div class="t" style="left:1018.2px;top:633px;width:35.55px">16</div>
<div class="t" style="left:1280.7px;top:633px;width:123.05px">Simplificado</div>
<div class="t" style="left:1405.7px;top:633px;width:68.05px">N</div>
<div class="t" style="left:1475.7px;top:633px;width:68.05px">N</div>
<div class="t" style="left:1545.7px;top:633px;width:48.05px">N</div>
<div class="t" style="left:1595.7px;top:633px;width:135.55px">N</div>
<div class="t" style="left:1770.7px;top:633px;width:99.3px">SRC</div>
<div class="t" style="left:18.5px;top:655px;width:42.75px">857</div>
<div class="t" style="left:63.2px;top:655px;width:178.05px">IR FOL OUT TRIB</div>
<div class="t" style="left:243.2px;top:655px;width:40.55px">Valor</div>
<div class="t r" style="left:285.75px;top:655px;width:33.5px">0,00</div>
<div class="t r" style="left:323.25px;top:655px;width:66.0px">27,50</div>
<div class="t r" style="left:393.25px;top:655px;width:78.5px">4.756,68</div>
<div class="t r" style="left:475.75px;top:655px;width:33.5px">0,00</div>
<div class="t" style="left:513.2px;top:655px;width:78.05px">31/10/2024</div>
<div class="t" style="left:593.2px;top:655px;width:95.55px">31/10/2024</div>
<div class="t" style="left:690.7px;top:655px;width:60.55px">1.01.01</div>
<div class="t r" style="left:753.25px;top:655px;width:33.5px">0</div>
<div class="t" style="left:790.7px;top:655px;width:35.55px">C</div>
<div class="t r" style="left:865.75px;top:655px;width:73.5px">21.300,00</div>
<div class="t" style="left:1018.2px;top:655px;width:35.55px">17</div>
<div class="t" style="left:1280.7px;top:655px;width:123.05px">Simplificado</div>
<div class="t" style="left:1405.7px;top:655px;width:68.05px">N</div>
<div class="t" style="left:1475.7px;top:655px;width:68.05px">N</div>
<div class="t" style="left:1545.7px;top:655px;width:48.05px">N</div>
<div class="t" style="left:1595.7px;top:655px;width:135.55px">N</div>
<div class="t" style="left:1770.7px;top:655px;width:99.3px">SRC</div>
<div class="t" style="left:18.5px;top:676px;width:42.75px">864</div>
<div class="t" style="left:63.2px;top:676px;width:178.05px">DED FOL MOD SIMPL</div>
<div class="t" style="left:243.2px;top:676px;width:40.55px">Valor</div>
<div class="t r" style="left:285.75px;top:676px;width:33.5px">0,00</div>
<div class="t r" style="left:323.25px;top:676px;width:66.0px">0,00</div>
<div class="t r" style="left:393.25px;top:676px;width:78.5px">564,80</div>
<div class="t r" style="left:475.75px;top:676px;width:33.5px">0,00</div>
<div class="t" style="left:513.2px;top:676px;width:78.05px">31/10/2024</div>
<div class="t" style="left:593.2px;top:676px;width:95.55px">31/10/2024</div>
<div class="t" style="left:690.7px;top:676px;width:60.55px">1.01.01</div>
<div class="t r" style="left:753.25px;top:676px;width:33.5px">0</div>
<div class="t" style="left:790.7px;top:676px;width:35.55px">C</div>
<div class="t r" style="left:865.75px;top:676px;width:73.5px">21.300,00</div>
<div class="t" style="left:1018.2px;top:676px;width:35.55px">18</div>
<div class="t" style="left:1405.7px;top:676px;width:68.05px">N</div>
<div class="t" style="left:1475.7px;top:676px;width:68.05px">N</div>
<div class="t" style="left:1545.7px;top:676px;width:48.05px">N</div>
<div class="t" style="left:1595.7px;top:676px;width:135.55px">N</div>
<div class="t" style="left:1770.7px;top:676px;width:99.3px">SRC</div>
<div class="t" style="left:18.5px;top:697px;width:42.75px">B01</div>
<div class="t" style="left:63.2px;top:697px;width:178.05px">INSS FOLHA FAIXA 1</div>
<div class="t" style="left:243.2px;top:697px;width:40.55px">Valor</div>
<div class="t r" style="left:285.75px;top:697px;width:33.5px">0,00</div>
<div class="t r" style="left:323.25px;top:697px;width:66.0px">7,50</div>
<div class="t r" style="left:393.25px;top:697px;width:78.5px">105,90</div>
<div class="t r" style="left:475.75px;top:697px;width:33.5px">0,00</div>
<div class="t" style="left:513.2px;top:697px;width:78.05px">31/10/2024</div>
<div class="t" style="left:593.2px;top:697px;width:95.55px">31/10/2024</div>
<div class="t" style="left:690.7px;top:697px;width:60.55px">1.01.01</div>
<div class="t r" style="left:753.25px;top:697px;width:33.5px">0</div>
<div class="t" style="left:790.7px;top:697px;width:35.55px">C</div>
<div class="t r" style="left:865.75px;top:697px;width:73.5px">21.300,00</div>
<div class="t" style="left:1018.2px;top:697px;width:35.55px">8</div>
<div class="t" style="left:1405.7px;top:697px;width:68.05px">N</div>
<div class="t" style="left:1475.7px;top:697px;width:68.05px">N</div>
<div class="t" style="left:1545.7px;top:697px;width:48.05px">N</div>
<div class="t" style="left:1595.7px;top:697px;width:135.55px">N</div>
<div class="t" style="left:1770.7px;top:697px;width:99.3px">SRC</div>
<div class="t" style="left:18.5px;top:718px;width:42.75px">B02</div>
<div class="t" style="left:63.2px;top:718px;width:178.05px">INSS FOLHA FAIXA 2</div>
<div class="t" style="left:243.2px;top:718px;width:40.55px">Valor</div>
<div class="t r" style="left:285.75px;top:718px;width:33.5px">0,00</div>
<div class="t r" style="left:323.25px;top:718px;width:66.0px">9,00</div>
<div class="t r" style="left:393.25px;top:718px;width:78.5px">112,92</div>
<div class="t r" style="left:475.75px;top:718px;width:33.5px">0,00</div>
<div class="t" style="left:513.2px;top:718px;width:78.05px">31/10/2024</div>
<div class="t" style="left:593.2px;top:718px;width:95.55px">31/10/2024</div>
<div class="t" style="left:690.7px;top:718px;width:60.55px">1.01.01</div>
<div class="t r" style="left:753.25px;top:718px;width:33.5px">0</div>
<div class="t" style="left:790.7px;top:718px;width:35.55px">C</div>
<div class="t r" style="left:865.75px;top:718px;width:73.5px">21.300,00</div>
<div class="t" style="left:1018.2px;top:718px;width:35.55px">9</div>
<div class="t" style="left:1405.7px;top:718px;width:68.05px">N</div>
<div class="t" style="left:1475.7px;top:718px;width:68.05px">N</div>
<div class="t" style="left:1545.7px;top:718px;width:48.05px">N</div>
<div class="t" style="left:1595.7px;top:718px;width:135.55px">N</div>
<div class="t" style="left:1770.7px;top:718px;width:99.3px">SRC</div>
<div class="a" style="left:1871px;top:218px;width:19px;height:19px;background:#e3e3e3;border:1.5px solid #aaa"></div>
<svg class="a" style="left:1871px;top:218px" width="19" height="19"><rect x="6.3" y="5.8" width="8.7" height="1.4" fill="#000"/><polygon points="6,13.7 10.6,8.2 15.2,13.7" fill="#000"/></svg>
<div class="a" style="left:1871px;top:239px;width:19px;height:19px;background:#e3e3e3;border:1.5px solid #aaa"></div>
<svg class="a" style="left:1871px;top:239px" width="19" height="19"><polygon points="6,8.7 10.6,3.7 15.2,8.7" fill="#000"/><polygon points="6,15 10.6,9.9 15.2,15" fill="#000"/></svg>
<div class="a" style="left:1871px;top:260px;width:19px;height:19px;background:#e3e3e3;border:1.5px solid #aaa"></div>
<svg class="a" style="left:1871px;top:260px" width="19" height="19"><polygon points="6,12.9 10.6,7.6 15.2,12.9" fill="#000"/></svg>
<div class="a" style="left:1871px;top:694px;width:19px;height:19px;background:#e3e3e3;border:1.5px solid #aaa"></div>
<svg class="a" style="left:1871px;top:694px" width="19" height="19"><polygon points="6,7.4 10.6,12.6 15.2,7.4" fill="#000"/></svg>
<div class="a" style="left:1871px;top:715px;width:19px;height:19px;background:#e3e3e3;border:1.5px solid #aaa"></div>
<svg class="a" style="left:1871px;top:715px" width="19" height="19"><polygon points="6,5.3 10.6,9.9 15.2,5.3" fill="#000"/><polygon points="6,11.2 10.6,16.6 15.2,11.2" fill="#000"/></svg>
<div class="a" style="left:1871px;top:736px;width:19px;height:20px;background:#e3e3e3;border:1.5px solid #aaa"></div>
<svg class="a" style="left:1871px;top:736px" width="19" height="20"><polygon points="6,6.9 10.6,12 15.2,6.9" fill="#000"/><rect x="6.3" y="13" width="8.7" height="1.4" fill="#000"/></svg>
<div class="a" style="left:1544px;top:611px;width:49px;height:21px;border:1px solid #000;outline:1px dotted #000;outline-offset:-2px"></div>
<svg class="a" style="left:0;top:0;mix-blend-mode:multiply" width="1901" height="751"><path d="M16,292 Q17,290 24,290 L48,290 L48,308 Q30,308 20,309.8 L15,309.8 Z" fill="#ffe600"/><path d="M15,336 Q15,334.8 18,334.8 L46,334.8 Q47,335 47,337 L47,353.3 L15,353.3 Z" fill="#ffe600"/><path d="M410.5,293 Q411,291 418,291 L460,289.5 Q472,288.8 474,289 L474,307 L430,308.5 Q415,309.8 411,309.5 Z" fill="#ffe600"/><path d="M393,336.5 Q393,335.9 396,335.9 L474,336 L474,355.1 L393,355.1 Z" fill="#ffe600"/></svg>
</body></html>
